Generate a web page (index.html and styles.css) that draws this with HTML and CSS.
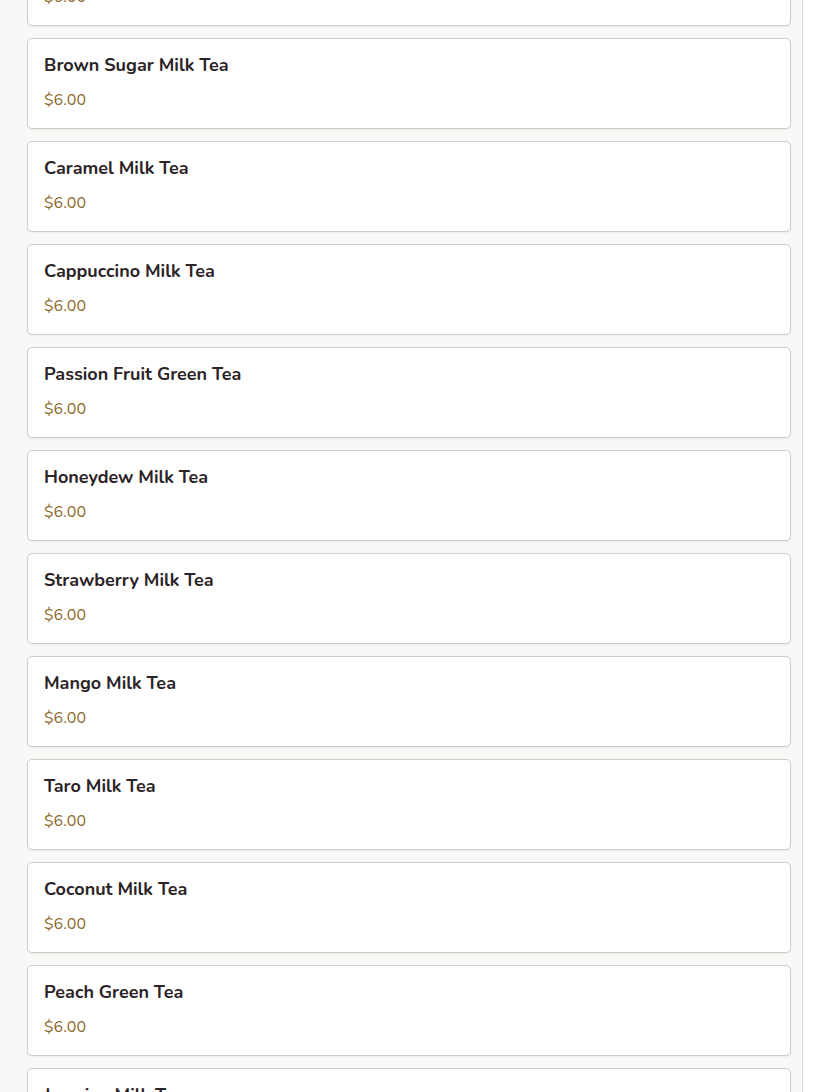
FILE: index.html
```html
<!DOCTYPE html>
<html lang="en">
<head>
<meta charset="utf-8">
<title>Menu</title>
<link rel="stylesheet" href="styles.css">
</head>
<body>
<div class="page">
  <div class="list">
    <div class="card"><div class="name">Classic Milk Tea</div><div class="price">$6.00</div></div>
    <div class="card"><div class="name">Brown Sugar Milk Tea</div><div class="price">$6.00</div></div>
    <div class="card"><div class="name">Caramel Milk Tea</div><div class="price">$6.00</div></div>
    <div class="card"><div class="name">Cappuccino Milk Tea</div><div class="price">$6.00</div></div>
    <div class="card"><div class="name">Passion Fruit Green Tea</div><div class="price">$6.00</div></div>
    <div class="card"><div class="name">Honeydew Milk Tea</div><div class="price">$6.00</div></div>
    <div class="card"><div class="name">Strawberry Milk Tea</div><div class="price">$6.00</div></div>
    <div class="card"><div class="name">Mango Milk Tea</div><div class="price">$6.00</div></div>
    <div class="card"><div class="name">Taro Milk Tea</div><div class="price">$6.00</div></div>
    <div class="card"><div class="name">Coconut Milk Tea</div><div class="price">$6.00</div></div>
    <div class="card"><div class="name">Peach Green Tea</div><div class="price">$6.00</div></div>
    <div class="card"><div class="name">Jasmine Milk Tea</div><div class="price">$6.00</div></div>
  </div>
</div>
</body>
</html>
```
FILE: styles.css
```css
html, body {
  margin: 0;
  padding: 0;
  background: #ffffff;
  height: 100%;
  overflow: hidden;
}
body {
  font-family: "Nunito", "Lato", "Open Sans", sans-serif;
}
.page {
  width: 803px;
  min-height: 100%;
  background: #f9f8f6;
  border-right: 1px solid #dcdad6;
  padding: 0 11px 0 27px;
  box-sizing: border-box;
}
.list {
  display: flex;
  flex-direction: column;
  gap: 12px;
  margin-top: -65px;
}
.card {
  background: #ffffff;
  border: 1px solid #cfcdca;
  border-radius: 5px;
  box-shadow: 0 1px 2px rgba(0,0,0,0.06);
  padding: 14px 16px 14px;
  height: 91px;
  box-sizing: border-box;
}
.name {
  font-size: 18px;
  font-weight: 700;
  color: #2b2326;
  line-height: 24px;
}
.price {
  margin-top: 13px;
  font-size: 16px;
  color: #8b6a2c;
  line-height: 20px;
}
```
